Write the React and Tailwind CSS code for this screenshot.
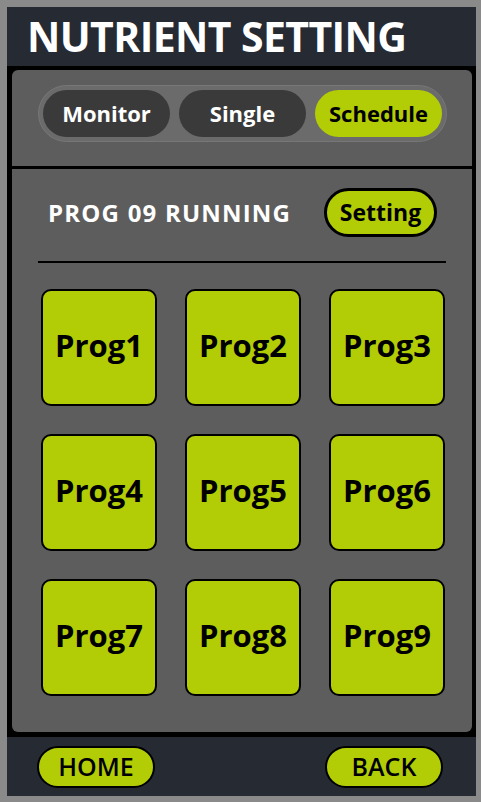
import { useState } from "react";

const font = { fontFamily: '"Open Sans", "Noto Sans", sans-serif' };

const tabs = ["Monitor", "Single", "Schedule"];
const progs = ["Prog1", "Prog2", "Prog3", "Prog4", "Prog5", "Prog6", "Prog7", "Prog8", "Prog9"];

const App = () => {
  const [tab, setTab] = useState("Schedule");

  return (
    <div
      className="w-[481px] h-[802px] bg-[#8a8a8a] pt-[7px] pl-[7px] pr-[5px] pb-[6px] flex"
      style={font}
    >
      <div className="flex-1 flex flex-col bg-[#252a33]">

        {/* TITLE */}
        <div className="h-[59px] flex items-center pl-[20px]">
          <h1 className="text-[41px] font-bold text-white leading-none tracking-[-0.6px]">
            NUTRIENT SETTING
          </h1>
        </div>

        {/* PANELS */}
        <div className="bg-black pt-[4px] pl-[5px] pr-[4px] pb-[5px] flex flex-col gap-[3px]">

          {/* TABS */}
          <div className="bg-[#5e5d5d] rounded-t-md pt-[15px] pb-[24px] pl-[26px] pr-[25px]">
            <div className="bg-[#6b6b6b] border border-[#777777] rounded-full p-[4px] grid grid-cols-3 gap-[9px]">
              {tabs.map((t) => (
                <button
                  key={t}
                  onClick={() => setTab(t)}
                  className={`h-[47px] rounded-full text-[22px] font-bold ${
                    tab === t
                      ? "bg-[#b2cc06] text-black"
                      : "bg-[#3b3a3a] text-white"
                  }`}
                >
                  {t}
                </button>
              ))}
            </div>
          </div>

          {/* PROGRAMS */}
          <div className="bg-[#5e5d5d] rounded-b-md h-[563px] px-[26px] pt-[19px]">

            <div className="flex items-center justify-between pl-[10px] pr-[9px]">
              <p className="text-white text-[24px] font-bold tracking-[1.2px]">
                PROG 09 RUNNING
              </p>
              <button className="w-[113px] h-[49px] rounded-full bg-[#b2cc06] border-[3px] border-black text-[23px] font-bold text-black">
                Setting
              </button>
            </div>

            <div className="h-[2px] bg-black mt-[24px]" />

            <div className="grid grid-cols-3 gap-[28px] pl-[3px] pr-[1px] mt-[26px]">
              {progs.map((p) => (
                <button
                  key={p}
                  className="h-[117px] rounded-[10px] bg-[#b2cc06] border-[2px] border-black text-[31px] font-bold text-black pb-[4px]"
                >
                  {p}
                </button>
              ))}
            </div>

          </div>
        </div>

        {/* FOOTER */}
        <div className="flex-1 flex items-center justify-between pl-[30px] pr-[33px]">
          <button className="w-[118px] h-[42px] rounded-full bg-[#b2cc06] border-[2px] border-black text-[25px] font-semibold text-black leading-none">
            HOME
          </button>
          <button className="w-[118px] h-[42px] rounded-full bg-[#b2cc06] border-[2px] border-black text-[25px] font-semibold text-black leading-none">
            BACK
          </button>
        </div>

      </div>
    </div>
  );
};

export default App;
